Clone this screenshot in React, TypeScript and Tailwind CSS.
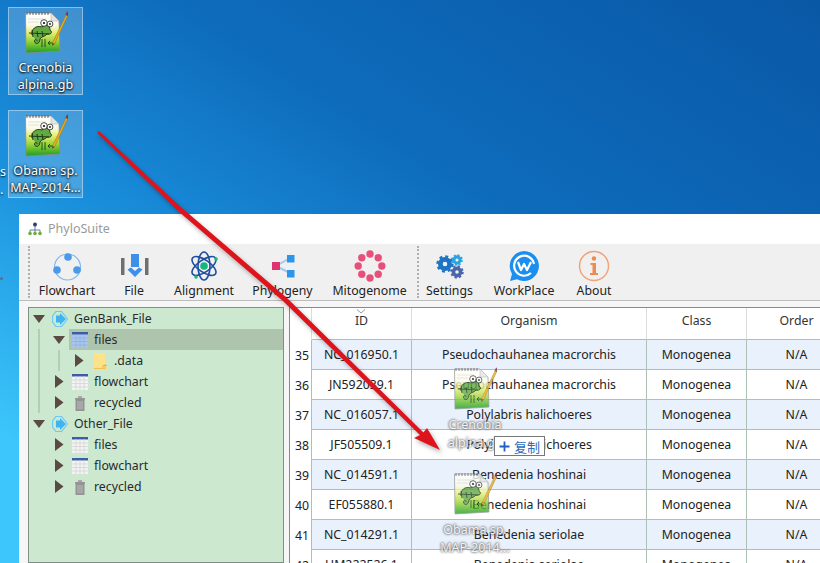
import React from "react";

const font = "font-['Noto_Sans','Noto_Sans_CJK_SC',sans-serif]";

function NppIcon({ id }: { id: string }) {
  return (
    <svg width="44" height="44" viewBox="0 0 44 44" className="block">
      <defs>
        <linearGradient id={id} x1="0" y1="0" x2="0" y2="1">
          <stop offset="0" stopColor="#ffffff" />
          <stop offset="0.3" stopColor="#fbfbe8" />
          <stop offset="0.5" stopColor="#e4ec70" />
          <stop offset="0.72" stopColor="#94d238" />
          <stop offset="1" stopColor="#1c9c22" />
        </linearGradient>
      </defs>
      <path d="M1.500 3H27L35 11L36 41L2 43Z" fill={`url(#${id})`} stroke="#8a8a8a" strokeWidth="0.8" />
      <path d="M27 3V11H35Z" fill="#e4e4e4" stroke="#aaa" strokeWidth="0.5" />
      <path d="M3 2V5M6 2V5M9 2V5M12 2V5M15 2V5M18 2V5M21 2V5M24 2V5" stroke="#555" strokeWidth="0.9" />
      <path d="M4 9H22M4 12H15" stroke="#d4d4d4" strokeWidth="0.7" />
      <path d="M8 25C7 19 12 15 18 17C21 14 26 15 26 20C29 22 27 25 23 24C21 27 17 26 16 29C16 34 11 35 10.500 31C10.500 29 13 29 13 31" fill="#62aa40" stroke="#1e3a1a" strokeWidth="1" />
      <path d="M5 23L25 24M8 20L9 27M13 21L14 27M18 21L19 27" stroke="#1e3a1a" strokeWidth="1" fill="none" />
      <circle cx="20" cy="13" r="3.300" fill="#fff" stroke="#1e2a1a" strokeWidth="0.8" />
      <circle cx="26" cy="14" r="2.900" fill="#fff" stroke="#1e2a1a" strokeWidth="0.8" />
      <circle cx="20" cy="13" r="1.100" fill="#111" />
      <circle cx="26" cy="14" r="0.900" fill="#111" />
      <path d="M18 29V37M21 29V37M24 33H31M26 31L24 33L26 35" stroke="#173f16" strokeWidth="0.9" fill="none" />
      <path d="M28.500 33L42.500 4L44 5L30.500 34Z" fill="#e8b020" stroke="#a87810" strokeWidth="0.6" />
      <path d="M41.500 5L43 1.500L44 2L44 6Z" fill="#7a3a4a" />
      <path d="M28.500 33L30.500 34L28 36Z" fill="#5a4a30" />
    </svg>
  );
}

function DesktopIcon({ id, lines }: { id: string; lines: string[] }) {
  return (
    <div className="w-[75px] h-[88px] bg-white/20 border border-white/40 flex flex-col items-center">
      <div className="mt-[2px]">
        <NppIcon id={id} />
      </div>
      <div className="mt-[5px] text-white text-[12.5px] tracking-[0.1px] leading-[17px] whitespace-nowrap text-center [text-shadow:0_1px_2px_#000,0_0_3px_#023]">
        {lines.map((l) => (
          <div key={l}>{l}</div>
        ))}
      </div>
    </div>
  );
}

function Gear({ cx, cy, r, color }: { cx: number; cy: number; r: number; color: string }) {
  const circ = 2 * Math.PI * r;
  return (
    <g>
      <circle cx={cx} cy={cy} r={r} fill="none" stroke={color} strokeWidth={r * 0.32} strokeDasharray={`${circ / 16} ${circ / 16}`} />
      <circle cx={cx} cy={cy} r={r * 0.62} fill="none" stroke={color} strokeWidth={r * 0.62} />
    </g>
  );
}

const toolIcons: Record<string, React.ReactNode> = {
  Flowchart: (
    <svg width="32" height="32" viewBox="0 0 32 32">
      <circle cx="16.500" cy="17" r="13" fill="none" stroke="#7db8ee" strokeWidth="1.200" />
      <circle cx="17" cy="7" r="3.800" fill="#4a9ae8" />
      <circle cx="6" cy="20" r="3.800" fill="#4a9ae8" />
      <circle cx="26" cy="20" r="3.800" fill="#4a9ae8" />
    </svg>
  ),
  File: (
    <svg width="32" height="32" viewBox="0 0 32 32">
      <rect x="3" y="8" width="3.500" height="17" fill="#6f6f6f" />
      <rect x="27" y="8" width="3.500" height="17" fill="#6f6f6f" />
      <rect x="13" y="4" width="8" height="13" fill="#3d8fe8" />
      <path d="M9.500 19.500L17 27L24.500 19.500L21 17.500L17 21L13 17.500Z" fill="#3d8fe8" />
    </svg>
  ),
  Alignment: (
    <svg width="32" height="32" viewBox="0 0 32 32">
      <g fill="none" stroke="#1f4ea0" strokeWidth="1.600">
        <ellipse cx="16" cy="16" rx="14" ry="6" transform="rotate(35 16 16)" />
        <ellipse cx="16" cy="16" rx="14" ry="6" transform="rotate(90 16 16)" />
        <ellipse cx="16" cy="16" rx="14" ry="6" transform="rotate(145 16 16)" />
      </g>
      <circle cx="16" cy="16" r="3.800" fill="#16b87a" />
      <circle cx="28" cy="9" r="1.800" fill="#16b87a" />
      <circle cx="8" cy="27" r="1.800" fill="#16b87a" />
    </svg>
  ),
  Phylogeny: (
    <svg width="32" height="32" viewBox="0 0 32 32">
      <path d="M9 16L23 8M9 16L23 23" stroke="#9ccbf0" strokeWidth="2" />
      <rect x="5" y="12" width="8" height="8" fill="#e0336e" />
      <rect x="20" y="5" width="7.500" height="7.500" fill="#2b96ea" />
      <rect x="20" y="20" width="7.500" height="7.500" fill="#2b96ea" />
    </svg>
  ),
  Mitogenome: (
    <svg width="32" height="32" viewBox="0 0 32 32" fill="#e8507c">
      <circle cx="16" cy="4" r="3.700" />
      <circle cx="24.200" cy="7.800" r="3.700" />
      <circle cx="27.800" cy="16" r="3.700" />
      <circle cx="24.200" cy="24.200" r="3.700" />
      <circle cx="16" cy="28" r="3.700" />
      <circle cx="7.800" cy="24.200" r="3.700" />
      <circle cx="4.200" cy="16" r="3.700" />
      <circle cx="7.800" cy="7.800" r="3.700" />
    </svg>
  ),
  Settings: (
    <svg width="32" height="32" viewBox="0 0 32 32">
      <Gear cx={11} cy={14} r={7.500} color="#1d74c4" />
      <Gear cx={23} cy={10} r={5} color="#2aa3e0" />
      <Gear cx={23} cy={22} r={5.800} color="#4a65a8" />
    </svg>
  ),
  WorkPlace: (
    <svg width="32" height="32" viewBox="0 0 32 32">
      <path d="M16 1A15 15 0 1 1 9 29.300L2 31L4 24A15 15 0 0 1 16 1Z" fill="#1a8ff0" />
      <path d="M23 23A10 10 0 1 1 26 14" fill="none" stroke="#fff" strokeWidth="2.200" />
      <path d="M10 12L13 20L16 14L19 20L23 12" fill="none" stroke="#fff" strokeWidth="2.200" strokeLinejoin="round" />
    </svg>
  ),
  About: (
    <svg width="32" height="32" viewBox="0 0 32 32">
      <circle cx="16" cy="16" r="14.500" fill="none" stroke="#f2a274" strokeWidth="1.400" />
      <circle cx="16" cy="8.500" r="2.200" fill="#ee8c50" />
      <path d="M12.500 13H18V23H20V25H12V23H14.500V15H12.500Z" fill="#ee8c50" />
    </svg>
  ),
};

function Tool({ name, w }: { name: string; w: string }) {
  return (
    <div className={`${w} shrink-0 flex flex-col items-center pt-[6px]`}>
      <div className="h-[32px] w-[32px]">{toolIcons[name]}</div>
      <div className="text-[12.3px] leading-[17px] text-[#222] whitespace-nowrap">{name}</div>
    </div>
  );
}

function Caret({ open }: { open: boolean }) {
  return (
    <svg width="12" height="13" viewBox="0 0 12 13">
      {open ? <path d="M0 3H12L6 11Z" fill="#5b4a42" /> : <path d="M2 0L10.500 6.500L2 13Z" fill="#5b4a42" />}
    </svg>
  );
}

function TableIcon({ selected }: { selected?: boolean }) {
  const line = selected ? "#8fb0dc" : "#d4d4d4";
  const body = selected ? "#a9c6ee" : "#f3f3f3";
  return (
    <svg width="16" height="16" viewBox="0 0 16 16">
      <rect width="16" height="16" fill={body} />
      <rect width="16" height="2.500" fill="#3c5da6" />
      <path d="M0 6H16M0 9.500H16M0 13H16M4 2V16M8 2V16M12 2V16" stroke={line} strokeWidth="0.800" />
    </svg>
  );
}

function Trash() {
  return (
    <svg width="16" height="16" viewBox="0 0 16 16">
      <path d="M3 3H13V4.500H12.500V16H3.500V4.500H3Z" fill="#939393" />
      <path d="M6 1H10V3H6Z" fill="#a8a8a8" />
      <path d="M6 6V14.500M8 6V14.500M10 6V14.500" stroke="#c4c4c4" strokeWidth="0.800" />
    </svg>
  );
}

function RootIcon() {
  return (
    <svg width="16" height="16" viewBox="0 0 16 16">
      <path d="M4 .5H9.500L15.500 8L9.500 15.500H4L.5 11V5Z" fill="none" stroke="#6cc8f4" strokeWidth="1.200" />
      <path d="M4 4.500H8V2L14 8L8 14V11.500H4Z" fill="#3eb4f2" />
    </svg>
  );
}

function Folder() {
  return (
    <svg width="13" height="16" viewBox="0 0 13 16">
      <path d="M0 0H11V12.500H13V16H0Z" fill="#fde28a" />
      <path d="M11 11V16M9 16V12.500H13" stroke="#e8b44a" strokeWidth="1" fill="none" />
      <path d="M0 15.500H11" stroke="#f0c050" strokeWidth="1" />
    </svg>
  );
}

function TreeRow({ open, icon, label, selected }: { open: boolean; icon: React.ReactNode; label: string; selected?: boolean }) {
  return (
    <div className="flex h-[21px] items-center">
      <div className="w-[20px] flex justify-center">
        <Caret open={open} />
      </div>
      <div className={`flex-1 h-[21px] flex items-center ${selected ? "bg-[#aec4ad]" : ""}`}>
        <div className="w-[25px] pl-[3px] flex items-center">{icon}</div>
        <span className="text-[12.3px] leading-[21px] text-[#2a2a2a]">{label}</span>
      </div>
    </div>
  );
}

const rows = [
  ["35", "NC_016950.1", "Pseudochauhanea macrorchis"],
  ["36", "JN592039.1", "Pseudochauhanea macrorchis"],
  ["37", "NC_016057.1", "Polylabris halichoeres"],
  ["38", "JF505509.1", "Polylabris halichoeres"],
  ["39", "NC_014591.1", "Benedenia hoshinai"],
  ["40", "EF055880.1", "Benedenia hoshinai"],
  ["41", "NC_014291.1", "Benedenia seriolae"],
  ["42", "HM222526.1", "Benedenia seriolae"],
];

function Table() {
  const head = "h-[32px] pb-[4px] border-r border-b border-r-[#dcdcdc] border-b-[#adc0b4] flex items-center justify-center text-[12.3px] text-[#333] shrink-0 bg-white";
  const cell = "h-full pt-[1px] border-r border-b border-[#adc0b4] flex items-center justify-center shrink-0";
  return (
    <div className="flex-1 min-w-0 border-t border-l border-[#8a8a8a] bg-white overflow-hidden">
      <div className="flex h-[32px] w-[560px]">
        <div className="w-[22px] shrink-0 border-r border-r-[#dcdcdc]" />
        <div className={`${head} w-[100px] relative`}>
          <svg className="absolute top-[1px] left-[44px]" width="10" height="5" viewBox="0 0 10 5">
            <path d="M1 .5L5 4L9 .5" fill="none" stroke="#999" strokeWidth="1" />
          </svg>
          ID
        </div>
        <div className={`${head} w-[235px]`}>Organism</div>
        <div className={`${head} w-[100px]`}>Class</div>
        <div className={`${head} w-[100px]`}>Order</div>
      </div>
      {rows.map((r, i) => (
        <div key={r[0]} className="flex h-[30px] w-[560px] text-[12.3px] text-[#222]">
          <div className="w-[22px] shrink-0 border-r border-[#adc0b4] bg-white flex items-center pl-[5px] pt-[2px]">{r[0]}</div>
          <div className={`flex w-[535px] shrink-0 ${i % 2 === 0 ? "bg-[#e9f1fc]" : "bg-white"}`}>
            <div className={`${cell} w-[100px]`}>{r[1]}</div>
            <div className={`${cell} w-[235px]`}>{r[2]}</div>
            <div className={`${cell} w-[100px]`}>Monogenea</div>
            <div className={`${cell} w-[100px]`}>N/A</div>
          </div>
        </div>
      ))}
    </div>
  );
}

function Tree() {
  return (
    <div className="w-[256px] shrink-0 border border-[#7f8f86] bg-[#cce8cf]">
      <TreeRow open icon={<RootIcon />} label="GenBank_File" />
      <div className="ml-[9px] border-l-2 border-[#b5cdb5] pl-[9px]">
        <TreeRow open icon={<TableIcon selected />} label="files" selected />
        <div className="ml-[9px] border-l-2 border-[#b5cdb5] pl-[9px]">
          <TreeRow open={false} icon={<span className="pl-[2px] block"><Folder /></span>} label=".data" />
        </div>
        <TreeRow open={false} icon={<TableIcon />} label="flowchart" />
        <TreeRow open={false} icon={<Trash />} label="recycled" />
      </div>
      <TreeRow open icon={<RootIcon />} label="Other_File" />
      <div className="ml-[9px] border-l-2 border-transparent pl-[9px]">
        <TreeRow open={false} icon={<TableIcon />} label="files" />
        <TreeRow open={false} icon={<TableIcon />} label="flowchart" />
        <TreeRow open={false} icon={<Trash />} label="recycled" />
      </div>
    </div>
  );
}

function DragGhost({ id, lines, top }: { id: string; lines: string[]; top: string }) {
  return (
    <div className={`absolute left-[440px] w-[70px] ${top} flex flex-col items-center`}>
      <div className="opacity-80">
        <NppIcon id={id} />
      </div>
      <div className="mt-[6px] text-white/90 text-[12.5px] leading-[18px] whitespace-nowrap text-center [text-shadow:0_0_2px_#555,0_0_3px_#666]">
        {lines.map((l) => (
          <div key={l}>{l}</div>
        ))}
      </div>
    </div>
  );
}

export default function App() {
  return (
    <div className={`relative w-[820px] h-[563px] overflow-hidden ${font} bg-[linear-gradient(212deg,#0958a6_0%,#0e6cbc_38%,#1a8fdc_62%,#3cc6fb_88%)]`}>
      {/* desktop icons */}
      <div className="absolute left-[8px] top-[7px] flex flex-col gap-[15px]">
        <DesktopIcon id="n1" lines={["Crenobia", "alpina.gb"]} />
        <DesktopIcon id="n2" lines={["Obama sp.", "MAP-2014..."]} />
      </div>
      <div className="absolute left-0 top-[163px] w-[8px] text-white text-[12.5px] leading-[18px] [text-shadow:0_1px_2px_#000]">
        <div>s</div>
        <div>.</div>
      </div>
      <div className="absolute left-0 top-[277px] w-[3px] h-[3px] rounded-full bg-[#5d6f86]" />

      {/* window */}
      <div className="absolute left-[19px] top-[214px] right-0 bottom-0 bg-white flex flex-col">
        <div className="h-[30px] shrink-0 flex items-center pl-[9px] gap-[6px]">
          <svg width="14" height="14" viewBox="0 0 14 14">
            <path d="M7 3V8M2 12V8H12V12M7 8V12" fill="none" stroke="#6a7f9a" strokeWidth="1" />
            <circle cx="7" cy="2.500" r="2" fill="#2c3e78" />
            <circle cx="2" cy="11.500" r="1.800" fill="#6aae3c" />
            <circle cx="7" cy="11.500" r="1.800" fill="#6aae3c" />
            <circle cx="12" cy="11.500" r="1.800" fill="#6aae3c" />
          </svg>
          <span className="text-[12.5px] text-[#9a9a9a]">PhyloSuite</span>
        </div>
        <div className="h-[57px] shrink-0 bg-[#f0f0f0] border-b border-[#bdbdbd] flex pl-[9px]">
          <div className="w-[2px] my-[2px] border-l-2 border-dotted border-[#b0b0b0]" />
          <div className="w-[5px]" />
          <Tool name="Flowchart" w="w-[64px]" />
          <Tool name="File" w="w-[70px]" />
          <Tool name="Alignment" w="w-[70px]" />
          <Tool name="Phylogeny" w="w-[87px]" />
          <Tool name="Mitogenome" w="w-[87px]" />
          <div className="w-[10px] flex justify-center">
            <div className="w-[2px] my-[2px] border-l-2 border-dotted border-[#b0b0b0]" />
          </div>
          <Tool name="Settings" w="w-[53px]" />
          <Tool name="WorkPlace" w="w-[96px]" />
          <Tool name="About" w="w-[44px]" />
        </div>
        <div className="flex-1 min-h-0 flex pl-[9px] pt-[6px] gap-[5px] bg-[#f6f6f6]">
          <Tree />
          <Table />
        </div>
      </div>

      {/* dragged ghost icons and copy badge */}
      <DragGhost id="n3" lines={["Crenobia", "alpina.gb"]} top="top-[366px]" />
      <DragGhost id="n4" lines={["Obama sp.", "MAP-2014..."]} top="top-[471px]" />
      <div className="absolute left-[494px] top-[436px] w-[51px] h-[20px] bg-white border border-[#777] flex items-center justify-center gap-[4px] text-[13px] text-[#2a6bc0] font-['Noto_Sans_CJK_SC',sans-serif]">
        <svg width="11" height="11" viewBox="0 0 11 11">
          <path d="M5.500 .5V10.500M.5 5.500H10.500" stroke="#1f5fc0" strokeWidth="1.800" />
        </svg>
        <span className="leading-none">复制</span>
      </div>

      {/* annotation arrow */}
      <svg className="absolute inset-0 pointer-events-none drop-shadow-[2px_3px_2px_rgba(0,0,0,0.3)]" width="820" height="563" viewBox="0 0 820 563">
        <path d="M97 133L99 131L182 208L287 298L427 436L424 439L283 301L178 211Z" fill="#dd141c" />
        <path d="M440 450L414 438L422 434L427 428Z" fill="#dd141c" />
      </svg>
    </div>
  );
}
